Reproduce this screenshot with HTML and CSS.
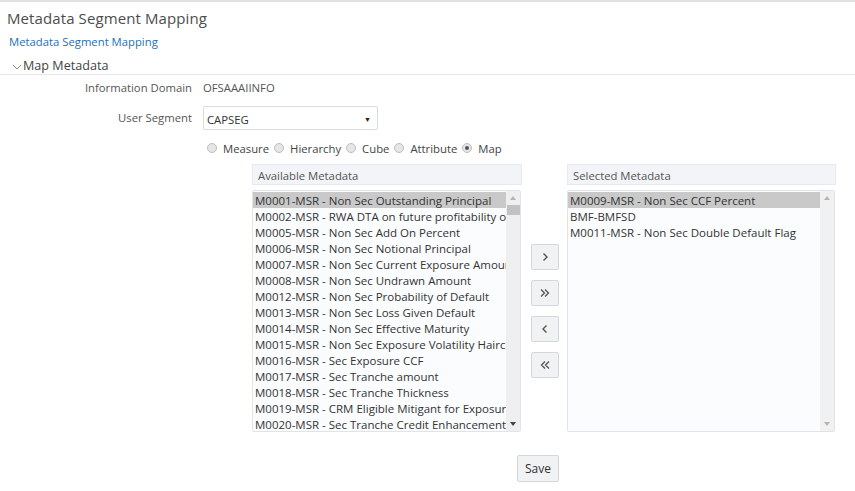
FILE: index.html
```html
<!DOCTYPE html>
<html>
<head>
<meta charset="utf-8">
<link rel="stylesheet" href="styles.css">
</head>
<body>
<div class="page">
  <div class="title">Metadata Segment Mapping</div>
  <div class="crumb"><a href="#">Metadata Segment Mapping</a></div>
  <div class="section">
    <svg class="chev" width="10" height="8" viewBox="0 0 10 8"><path d="M1 2 L5 6 L9 2" fill="none" stroke="#8a8a8a" stroke-width="1"/></svg>
    <span>Map Metadata</span>
  </div>
  <div class="row r-domain">
    <div class="label">Information Domain</div>
    <div class="value">OFSAAAIINFO</div>
  </div>
  <div class="row r-seg">
    <div class="label">User Segment</div>
    <div class="select"><span>CAPSEG</span><span class="caret">▼</span></div>
  </div>
  <div class="radios">
    <label class="radio"><span class="dot"></span>Measure</label>
    <label class="radio"><span class="dot"></span>Hierarchy</label>
    <label class="radio"><span class="dot"></span>Cube</label>
    <label class="radio"><span class="dot"></span>Attribute</label>
    <label class="radio"><span class="dot on"></span>Map</label>
  </div>
  <div class="mapper">
    <div class="col col-left">
      <div class="head">Available Metadata</div>
      <div class="list">
        <div class="items">
          <div class="item sel">M0001-MSR - Non Sec Outstanding Principal</div>
          <div class="item">M0002-MSR - RWA DTA on future profitability of</div>
          <div class="item">M0005-MSR - Non Sec Add On Percent</div>
          <div class="item">M0006-MSR - Non Sec Notional Principal</div>
          <div class="item">M0007-MSR - Non Sec Current Exposure Amount</div>
          <div class="item">M0008-MSR - Non Sec Undrawn Amount</div>
          <div class="item">M0012-MSR - Non Sec Probability of Default</div>
          <div class="item">M0013-MSR - Non Sec Loss Given Default</div>
          <div class="item">M0014-MSR - Non Sec Effective Maturity</div>
          <div class="item">M0015-MSR - Non Sec Exposure Volatility Haircut</div>
          <div class="item">M0016-MSR - Sec Exposure CCF</div>
          <div class="item">M0017-MSR - Sec Tranche amount</div>
          <div class="item">M0018-MSR - Sec Tranche Thickness</div>
          <div class="item">M0019-MSR - CRM Eligible Mitigant for Exposure</div>
          <div class="item">M0020-MSR - Sec Tranche Credit Enhancement Level</div>
        </div>
        <div class="sbar">
          <span class="arr up"></span>
          <span class="thumb"></span>
          <span class="fill"></span>
          <span class="arr down dark"></span>
        </div>
      </div>
    </div>
    <div class="btns">
      <button class="mv" aria-label="Move"><svg width="10" height="10" viewBox="0 0 10 10"><path d="M3.5 1.5 L7 5 L3.5 8.5" fill="none" stroke="#555" stroke-width="1.4"/></svg></button>
      <button class="mv" aria-label="Move all"><svg width="12" height="10" viewBox="0 0 12 10"><path d="M2 1.5 L5.5 5 L2 8.5 M6 1.5 L9.5 5 L6 8.5" fill="none" stroke="#555" stroke-width="1.3"/></svg></button>
      <button class="mv" aria-label="Remove"><svg width="10" height="10" viewBox="0 0 10 10"><path d="M6.5 1.5 L3 5 L6.5 8.5" fill="none" stroke="#555" stroke-width="1.4"/></svg></button>
      <button class="mv" aria-label="Remove all"><svg width="12" height="10" viewBox="0 0 12 10"><path d="M6 1.5 L2.5 5 L6 8.5 M10 1.5 L6.5 5 L10 8.5" fill="none" stroke="#555" stroke-width="1.3"/></svg></button>
    </div>
    <div class="col col-right">
      <div class="head">Selected Metadata</div>
      <div class="list">
        <div class="items">
          <div class="item sel">M0009-MSR - Non Sec CCF Percent</div>
          <div class="item">BMF-BMFSD</div>
          <div class="item">M0011-MSR - Non Sec Double Default Flag</div>
        </div>
        <div class="sbar light">
          <span class="arr up"></span>
          <span class="fill"></span>
          <span class="arr down"></span>
        </div>
      </div>
    </div>
  </div>
  <div class="footer"><button class="save">Save</button></div>
</div>
</body>
</html>
```

FILE: styles.css
```css
html, body {
  margin: 0;
  padding: 0;
  background: #fff;
}
body {
  font-family: "Open Sans", "Noto Sans", "Liberation Sans", sans-serif;
  font-size: 11.3px;
  color: #333;
}
.page {
  width: 855px;
  height: 491px;
  border-top: 2px solid #e1e1e1;
  box-sizing: border-box;
  overflow: hidden;
}
.title {
  padding: 5px 0 0 7px;
  height: 24px;
  font-size: 15px;
  letter-spacing: 0.1px;
  color: #4d4d4d;
  line-height: 22px;
}
.crumb {
  padding: 1px 0 0 9px;
  height: 22px;
  line-height: 20px;
  box-sizing: border-box;
}
.crumb a {
  color: #1f6fb8;
  text-decoration: none;
  font-size: 11.3px;
}
.section {
  display: flex;
  align-items: center;
  height: 18px;
  padding: 3px 0 0 12px;
  border-bottom: 1px solid #e6e8ee;
  font-size: 12.6px;
  color: #444;
}
.chev {
  margin-right: 1px;
  margin-top: 3px;
}
.row {
  display: flex;
  align-items: center;
  gap: 11px;
}
.label {
  width: 192px;
  text-align: right;
  color: #555;
}
.value {
  color: #555;
}
.r-domain {
  height: 24px;
}
.r-seg {
  margin-top: 7px;
  height: 24px;
  align-items: flex-start;
}
.r-seg .label {
  line-height: 20px;
  padding-top: 2px;
}
.select {
  width: 175px;
  height: 24px;
  box-sizing: border-box;
  border: 1px solid #d7dbe2;
  border-radius: 2px;
  display: flex;
  align-items: center;
  justify-content: space-between;
  padding: 3px 6px 0 3px;
  color: #333;
}
.caret {
  font-size: 7px;
  color: #222;
}
.radios {
  display: flex;
  align-items: center;
  padding-left: 207px;
  margin-top: 8px;
  height: 20px;
  gap: 5px;
  color: #444;
}
.radio {
  display: flex;
  align-items: center;
  gap: 6px;
}
.dot {
  width: 10px;
  height: 10px;
  border-radius: 50%;
  border: 1px solid #bdbdbd;
  background: #e6e6e6;
  box-sizing: border-box;
  position: relative;
}
.dot.on::after {
  content: "";
  position: absolute;
  left: 2px;
  top: 2px;
  width: 4px;
  height: 4px;
  border-radius: 50%;
  background: #555;
}
.mapper {
  display: flex;
  padding-left: 252px;
  margin-top: 6px;
  height: 268px;
}
.col {
  display: flex;
  flex-direction: column;
}
.head {
  height: 21px;
  box-sizing: border-box;
  border: 1px solid #e6e9ef;
  background: #f2f4f8;
  padding-left: 5px;
  line-height: 21px;
  color: #555;
}
.col-left .head { width: 270px; }
.col-right .head { width: 269px; }
.list {
  margin-top: 5px;
  height: 242px;
  box-sizing: border-box;
  border: 1px solid #dfe4ea;
  border-radius: 2px;
  background: #fbfcfe;
  display: flex;
  overflow: hidden;
}
.col-left .list { width: 269px; }
.col-right .list { width: 268px; }
.items {
  flex: 1;
  min-width: 0;
  padding-top: 1px;
}
.item {
  height: 16px;
  line-height: 17px;
  white-space: nowrap;
  overflow: hidden;
  padding-left: 2px;
  color: #333;
  font-size: 11.5px;
}
.item.sel {
  background: #c9c9c9;
}
.sbar {
  width: 14px;
  background: #efefef;
  display: flex;
  flex-direction: column;
  align-items: center;
}
.sbar.light {
  background: #f1f1f1;
}
.arr {
  width: 0;
  height: 0;
  margin: 5px 0;
  border-left: 3px solid transparent;
  border-right: 3px solid transparent;
}
.arr.up {
  border-bottom: 4px solid #b5b5b5;
}
.arr.down {
  border-top: 4px solid #b5b5b5;
}
.arr.down.dark {
  border-top-color: #444;
}
.thumb {
  width: 13px;
  height: 10px;
  background: #c2c2c2;
}
.fill { flex: 1; }
.btns {
  width: 45px;
  display: flex;
  flex-direction: column;
  align-items: center;
  padding-top: 80px;
  gap: 10px;
}
.mv {
  width: 28px;
  height: 26px;
  border: 1px solid #d4d8de;
  border-radius: 2px;
  background: #f1f2f4;
  padding: 0;
  display: flex;
  align-items: center;
  justify-content: center;
}
.mv svg {
  display: block;
}
.footer {
  display: flex;
  justify-content: center;
  padding-left: 221px;
  margin-top: 23px;
}
.save {
  width: 42px;
  height: 27px;
  border: 1px solid #d4d8de;
  border-radius: 2px;
  background: #f1f2f4;
  font-family: "Open Sans", "Noto Sans", sans-serif;
  font-size: 12px;
  color: #333;
  padding: 0;
}
```
